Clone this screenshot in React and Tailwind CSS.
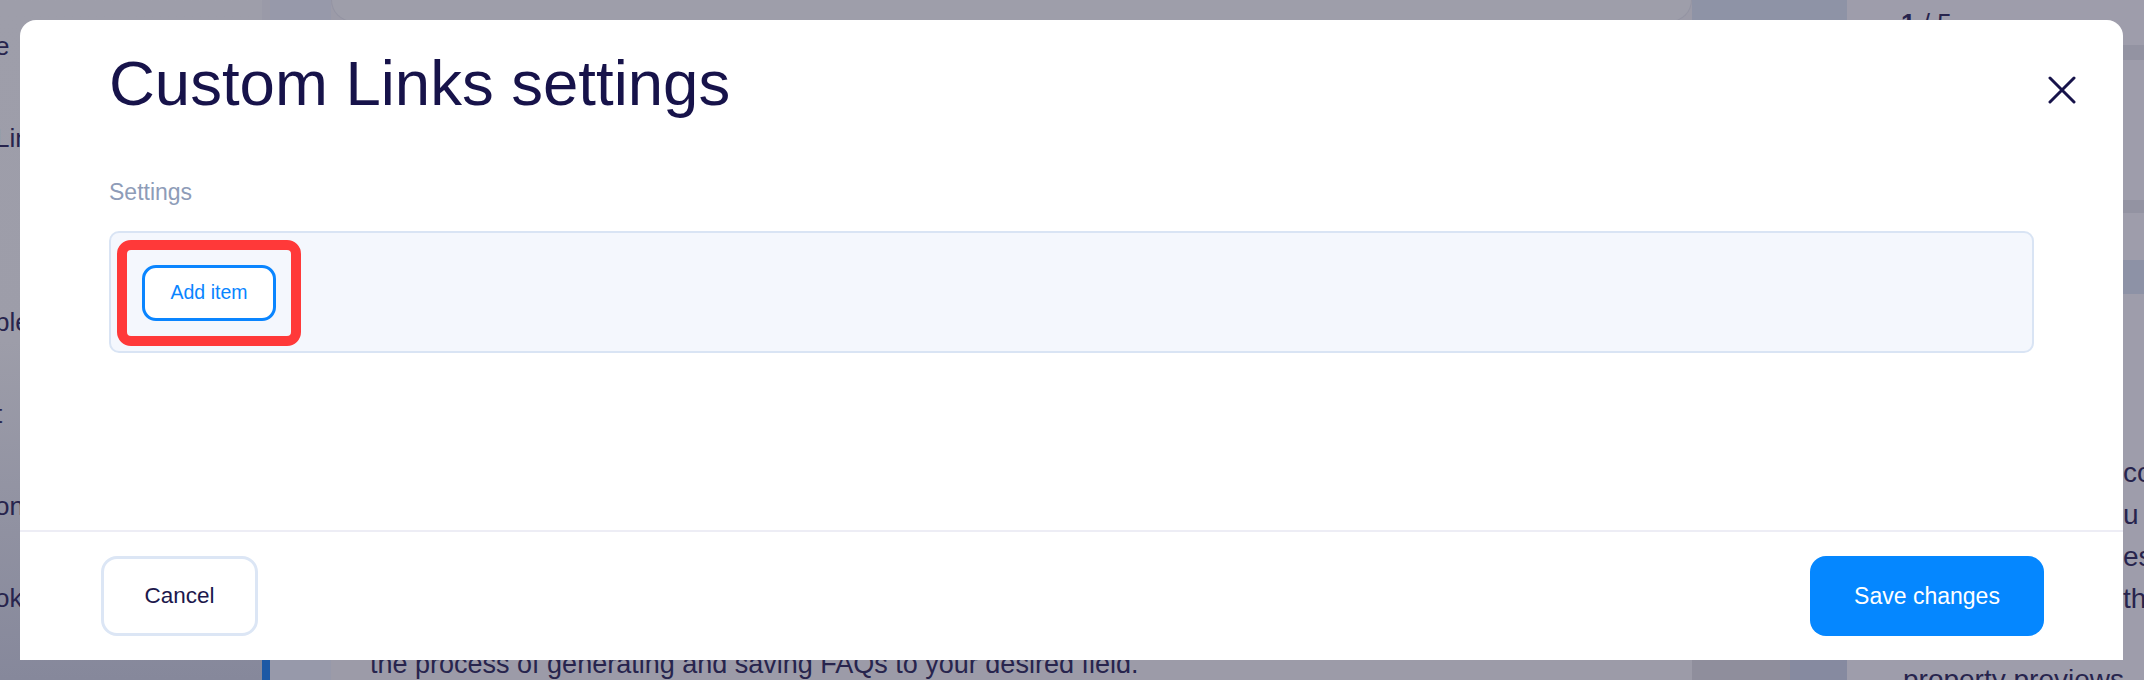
import React from 'react';

const sideItems = ['e', 'Links', '', 'ble', 't', 'on', 'ok'];

const rightTails = ['co', 'u', 'es', 'th'];

function CloseIcon() {
  return (
    <svg width="28" height="28" viewBox="0 0 28 28" fill="none">
      <path d="M2 2L26 26M26 2L2 26" stroke="#17134a" strokeWidth="3" strokeLinecap="round" />
    </svg>
  );
}

function BackgroundPage() {
  return (
    <div className="flex h-full">
      {/* sidebar */}
      <aside className="w-[262px] shrink-0 overflow-hidden bg-gradient-to-b from-[#9e9eaa] via-[#9d9da9] to-[#86889b]">
        {sideItems.map((label, i) => (
          <div key={i} className="h-[92px] flex items-center -ml-[5px] text-[26px] text-[#27244d] whitespace-nowrap">
            {label}
          </div>
        ))}
      </aside>
      <div className="w-[8px] shrink-0 flex flex-col bg-[#9a9aa8]">
        <div className="flex-1" />
        <div className="h-[20px] bg-[#1d59a5]" />
      </div>
      <div className="w-[61px] shrink-0 bg-[#9799aa]" />

      {/* main column */}
      <main className="w-[1361px] shrink-0 flex flex-col bg-[#9c9ba8]">
        <div className="h-[22px] shrink-0 rounded-b-[22px] border border-t-0 border-[#9494a3] bg-[#9e9eaa]" />
        <div className="flex-1" />
        <div className="h-[32px] shrink-0 pl-[39px] text-[27px] leading-[32px] text-[#27244d] whitespace-nowrap">
          the process of generating and saving FAQs to your desired field.
        </div>
      </main>

      <div className="w-[155px] shrink-0 flex flex-col">
        <div className="h-[22px] shrink-0 bg-[#8e93a6]" />
        <div className="flex-1 bg-[#9c9ba8]" />
        <div className="h-[20px] shrink-0 flex">
          <div className="w-[98px] bg-[#8f8e9c]" />
          <div className="flex-1 bg-[#868aa0]" />
        </div>
      </div>

      {/* right panel */}
      <div className="flex-1 h-full bg-[#9e9dab] overflow-hidden">
        <div className="h-[45px] pl-[54px] pt-[8px] text-[26px] leading-[30px] text-[#27244d] whitespace-nowrap">
          <span className="font-bold">1</span> / 5
        </div>
        <div className="h-[15px] bg-[#9393a2]" />
        <div className="h-[140px]" />
        <div className="h-[13px] bg-[#9393a2]" />
        <div className="h-[47px]" />
        <div className="h-[34px] bg-[#8d92a6]" />
        <div className="h-[158px]" />
        {rightTails.map((tail, i) => (
          <div key={i} className="h-[42px] flex items-center pl-[276px] text-[28px] text-[#27244d] whitespace-nowrap">
            {tail}
          </div>
        ))}
        <div className="h-[39px]" />
        <div className="h-[42px] flex items-center pl-[56px] text-[28px] text-[#27244d] whitespace-nowrap">
          property previews
        </div>
      </div>
    </div>
  );
}

export default function App() {
  return (
    <div className="relative w-[2144px] h-[680px] overflow-hidden bg-[#9c9ba8] font-['Liberation_Sans',Arial,sans-serif]">
      <BackgroundPage />

      {/* modal */}
      <div className="absolute left-[20px] top-[20px] w-[2103px] h-[640px] bg-white rounded-t-[16px] flex flex-col">
        <div className="relative pt-[32px] pl-[89px]">
          <h1 className="text-[63.5px] leading-none text-[#17134a] whitespace-nowrap">Custom Links settings</h1>
          <button className="absolute right-[47px] top-[56px] w-[28px] h-[28px] flex items-center justify-center">
            <CloseIcon />
          </button>
        </div>

        <div className="pt-[65px] px-[89px]">
          <div className="text-[23px] leading-none h-[23px] text-[#8e9cb8]">Settings</div>
          <div className="mt-[27px] border-2 border-[#d9e4f4] bg-[#f4f7fd] rounded-[10px] pt-[7px] pb-[5px] pl-[6px]">
            <div className="inline-flex border-[10px] border-[#ff3939] rounded-[14px] p-[15px]">
              <button className="w-[134px] h-[56px] border-[3px] border-[#0a85ff] rounded-[14px] bg-white text-[19.5px] text-[#0a85ff]">
                Add item
              </button>
            </div>
          </div>
        </div>

        <div className="mt-auto h-[130px] shrink-0 border-t-2 border-[#ededf5] flex items-center justify-between pl-[81px] pr-[79px]">
          <button className="w-[157px] h-[80px] border-[3px] border-[#dce6f5] rounded-[16px] bg-white text-[22.5px] text-[#1c184c]">
            Cancel
          </button>
          <button className="w-[234px] h-[80px] rounded-[16px] bg-[#0587ff] text-[23px] text-white">
            Save changes
          </button>
        </div>
      </div>
    </div>
  );
}
